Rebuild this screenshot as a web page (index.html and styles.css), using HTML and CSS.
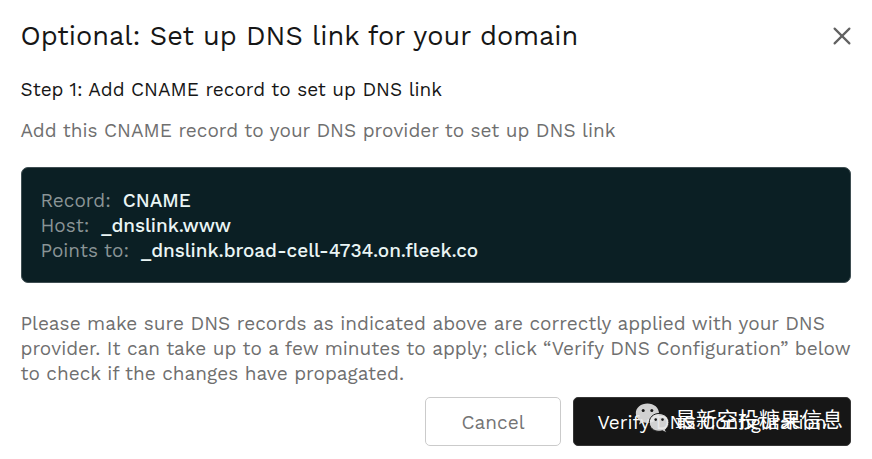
FILE: index.html
```html
<!DOCTYPE html>
<html lang="en">
<head>
    <meta charset="UTF-8">
    <meta name="viewport" content="width=device-width, initial-scale=1.0">
    <title>Set up DNS link</title>
    <link rel="stylesheet" href="styles.css">
</head>
<body>
<div class="modal">
    <div class="modal-header">
        <h1>Optional: Set up DNS link for your domain</h1>
        <button class="close" aria-label="Close">
            <svg width="20" height="20" viewBox="0 0 20 20">
                <path d="M2.6 2.6 17.4 17.4M17.4 2.6 2.6 17.4"/>
            </svg>
        </button>
    </div>
    <h2>Step 1: Add CNAME record to set up DNS link</h2>
    <p class="intro">Add this CNAME record to your DNS provider to set up DNS link</p>
    <div class="record-box">
        <div class="record"><span class="label">Record:</span><span class="value">CNAME</span></div>
        <div class="record"><span class="label">Host:</span><span class="value">_dnslink.www</span></div>
        <div class="record"><span class="label">Points to:</span><span class="value">_dnslink.broad-cell-4734.on.fleek.co</span></div>
    </div>
    <p class="note">
        Please make sure DNS records as indicated above are correctly applied with your DNS<br>
        provider. It can take up to a few minutes to apply; click “Verify DNS Configuration” below<br>
        to check if the changes have propagated.
    </p>
    <div class="actions">
        <button class="btn btn-cancel">Cancel</button>
        <button class="btn btn-verify">Verify DNS Configuration</button>
        <div class="watermark">
            <svg width="36" height="32" viewBox="0 0 36 32">
                <path class="bubble" d="M12.500 1.500C6 1.500.8 5.700.8 11.200c0 3.200 1.700 5.900 4.300 7.700L4 22.400l4.200-2.100c1.300.4 2.800.6 4.300.6 6.500 0 11.500-4.300 11.500-9.700S19 1.500 12.500 1.500z"/>
                <circle class="eye" cx="8.200" cy="8.500" r="1.500"/>
                <circle class="eye" cx="16.800" cy="8.500" r="1.500"/>
                <path class="bubble front" d="M24 11.500c-5.600 0-9.700 3.900-9.700 8.900s4.100 8.900 9.700 8.900c1.300 0 2.500-.2 3.600-.5l4 2.200-1.200-3.400c2.100-1.600 3.500-4.200 3.500-7.200 0-5-4.300-8.900-9.900-8.900z"/>
                <circle class="eye" cx="20.700" cy="17.600" r="1.300"/>
                <circle class="eye" cx="27.500" cy="17.600" r="1.300"/>
            </svg>
            <span class="account">最新空投糖果信息</span>
        </div>
    </div>
</div>
</body>
</html>
```
FILE: styles.css
```css
body {
    margin: 0;
    background: #fff;
    font-family: "Work Sans", Inter, Roboto, sans-serif;
    font-size: 19px;
    color: #6f6f6f;
}
h1, h2, p {
    margin: 0;
    white-space: nowrap;
}
.modal {
    box-sizing: border-box;
    width: 872px;
    height: 459px;
    padding: 16px 21px 0 20.5px;
    overflow: hidden;
}
.modal-header {
    display: flex;
    justify-content: space-between;
    height: 40px;
}
h1 {
    font-size: 27.1px;
    font-weight: 400;
    line-height: 40px;
    color: #161616;
}
.close {
    padding: 0;
    margin-right: -1px;
    border: 0;
    background: none;
    line-height: 0;
}
.close path {
    fill: none;
    stroke: #626262;
    stroke-width: 2.2;
    stroke-linecap: round;
}
h2 {
    margin-top: 21px;
    font-size: 19px;
    font-weight: 400;
    line-height: 25px;
    color: #161616;
}
.intro {
    margin-top: 16px;
    line-height: 25px;
}
.record-box {
    box-sizing: border-box;
    height: 116px;
    margin: 24px 0 0;
    padding: 20px 19px;
    border: 1px solid #3f4e52;
    border-radius: 7px;
    background: #0b1f24;
    line-height: 25px;
    white-space: nowrap;
}
.record {
    display: flex;
    gap: 12px;
    height: 25px;
}
.label {
    color: #8a9496;
}
.value {
    font-weight: 500;
    letter-spacing: -0.07px;
    color: #eaf5f5;
}
.note {
    margin-top: 28px;
    line-height: 25px;
}
.actions {
    position: relative;
    display: flex;
    justify-content: flex-end;
    gap: 12px;
    margin-top: 11px;
}
.btn {
    box-sizing: border-box;
    height: 49px;
    padding: 2px 0 0;
    border-radius: 5px;
    font: inherit;
    white-space: nowrap;
}
.btn-cancel {
    width: 136px;
    border: 1px solid #cbcbcb;
    background: #fff;
    color: #747474;
}
.btn-verify {
    width: 278px;
    border: 1px solid #353535;
    background: #161616;
    color: #fff;
}
/* account stamp lying over the verify button */
.watermark {
    position: absolute;
    top: 5px;
    right: 8px;
    display: flex;
    gap: 4px;
    font-family: "Noto Sans CJK SC", sans-serif;
    font-size: 21px;
    line-height: 32px;
    color: #fff;
    white-space: nowrap;
}
.bubble {
    fill: #e5e5e5;
    fill-opacity: 0.9;
}
.front {
    stroke: #161616;
    stroke-width: 1;
}
.eye {
    fill: #161616;
}
```
